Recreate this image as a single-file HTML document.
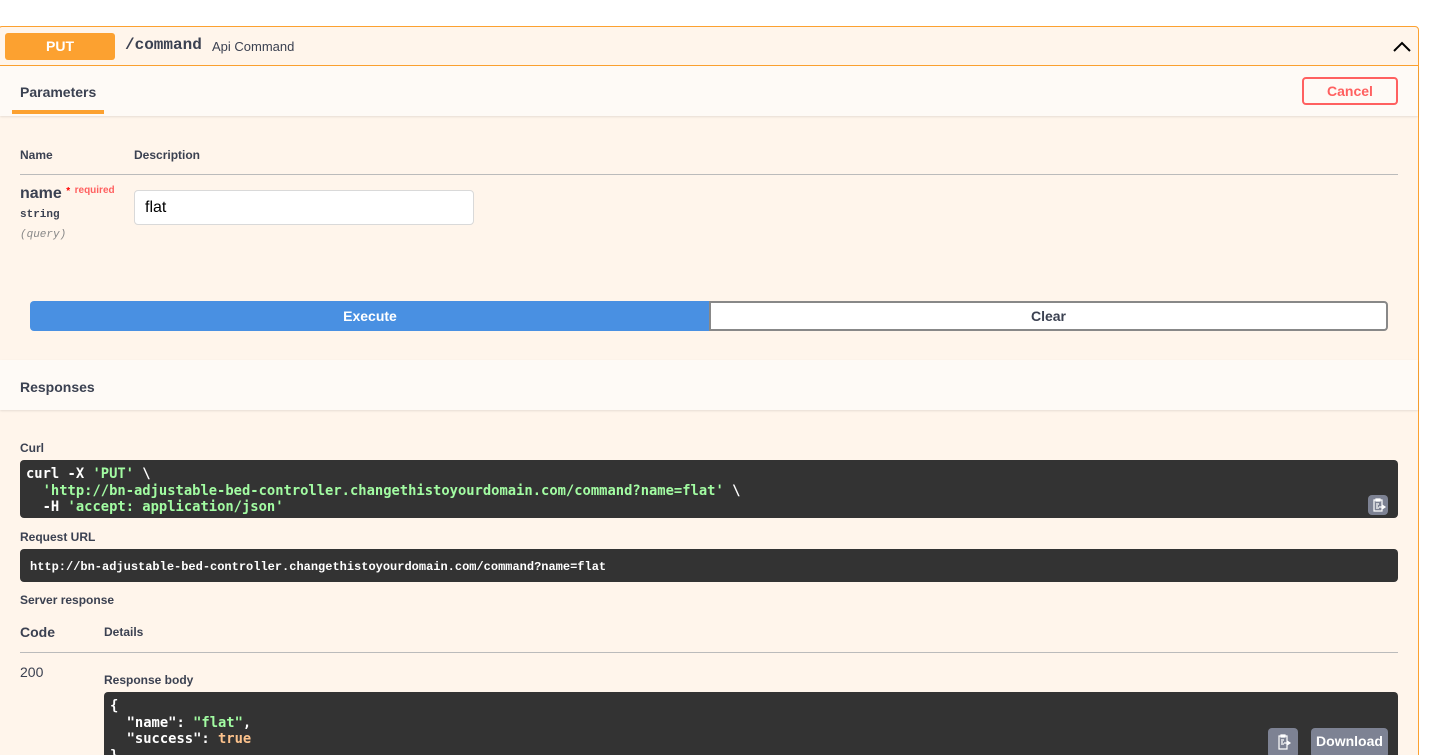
<!DOCTYPE html>
<html style="height:755px;overflow:hidden"><head><style>
*{box-sizing:border-box;margin:0;padding:0}
body{width:1435px;height:755px;background:#fff;font-family:"Liberation Sans",sans-serif;color:#3b4151;position:relative;overflow:hidden}
.a{position:absolute}
.box{left:-2px;top:26px;width:1421px;height:740px;border:1px solid #fca130;border-radius:4px;background:#fff5eb}
.b{font-weight:bold}
.mono{font-family:"Liberation Mono",monospace}
.code{background:#333;border-radius:4px;color:#fff;font-family:"DejaVu Sans Mono","Liberation Mono",monospace;font-weight:bold;font-size:13.8px}
.g{color:#a2fca2}
.cp{width:20px;height:20px;background:#7d8293;border-radius:4px}
</style></head><body>
<div class="a box"></div>
<div class="a" style="left:0;top:65px;width:1418px;height:1px;background:#fca130"></div>
<div class="a b" style="left:5px;top:33px;width:110px;height:27px;background:#fca130;border-radius:3px;color:#fff;font-size:14px;text-align:center;line-height:27px">PUT</div>
<div class="a mono b" style="left:125px;top:36px;font-size:16px;color:#3b4151">/command</div>
<div class="a" style="left:212px;top:39px;font-size:13px">Api Command</div>
<svg class="a" style="left:1392px;top:38px" width="20" height="16"><path d="M2 13 L10 5 L18 13" stroke="#000" stroke-width="2" fill="none"/></svg>
<div class="a" style="left:0;top:66px;width:1418px;height:50px;background:#fefaf6;box-shadow:0 1px 2px rgba(0,0,0,.1)"></div>
<div class="a b" style="left:20px;top:84px;font-size:14px">Parameters</div>
<div class="a" style="left:12px;top:110px;width:92px;height:4px;background:#fca130"></div>
<div class="a b" style="left:1302px;top:77px;width:96px;height:28px;border:2px solid #ff6060;border-radius:4px;color:#ff6060;font-size:14px;text-align:center;line-height:24px">Cancel</div>
<div class="a b" style="left:20px;top:148px;font-size:12px">Name</div>
<div class="a b" style="left:134px;top:148px;font-size:12px">Description</div>
<div class="a" style="left:20px;top:174px;width:1378px;height:1px;background:#bbb"></div>
<div class="a b" style="left:20px;top:185px;font-size:16px">name <span style="color:#ff0000;font-size:10px;vertical-align:4px">*</span> <span style="color:#ff6060;font-size:10px;vertical-align:5px">required</span></div>
<div class="a mono b" style="left:20px;top:209px;font-size:11px">string</div>
<div class="a mono" style="left:20px;top:229px;font-size:11px;font-style:italic;color:#888">(query)</div>
<div class="a" style="left:134px;top:190px;width:340px;height:35px;background:#fff;border:1px solid #d9d9d9;border-radius:4px;font-size:16px;padding:8px 10px;color:#000">flat</div>
<div class="a b" style="left:30px;top:301px;width:680px;height:30px;background:#4990e2;border-radius:4px 0 0 4px;color:#fff;font-size:14px;text-align:center;line-height:30px">Execute</div>
<div class="a b" style="left:709px;top:301px;width:679px;height:30px;border:2px solid #888;border-radius:0 4px 4px 0;background:#fff;font-size:14px;text-align:center;line-height:26px">Clear</div>
<div class="a" style="left:0;top:360px;width:1418px;height:50px;background:#fefaf6;box-shadow:0 1px 2px rgba(0,0,0,.1)"></div>
<div class="a b" style="left:20px;top:379px;font-size:14px">Responses</div>
<div class="a b" style="left:20px;top:441px;font-size:12px">Curl</div>
<div class="a code" style="left:20px;top:460px;width:1378px;height:58px;padding:6px 6px;line-height:16.5px;white-space:pre">curl -X <span class="g">'PUT'</span> \
  <span class="g">'http://bn-adjustable-bed-controller.changethistoyourdomain.com/command?name=flat'</span> \
  -H <span class="g">'accept: application/json'</span></div>
<div class="a cp" style="left:1368px;top:495px"><svg width="20" height="20"><path d="M6 5h8v11H6z M8 4h4v2H8z M8 9h3 M8 11h2 M8 13h3 M11 12h6 M14 10l3 2-3 2" stroke="#fff" stroke-width="1.2" fill="none"/></svg></div>
<div class="a b" style="left:20px;top:530px;font-size:12px">Request URL</div>
<div class="a code" style="left:20px;top:549px;width:1378px;height:33px;padding:11px 10px 0;font-family:'Liberation Mono',monospace;font-size:12px">http://bn-adjustable-bed-controller.changethistoyourdomain.com/command?name=flat</div>
<div class="a b" style="left:20px;top:593px;font-size:12px">Server response</div>
<div class="a b" style="left:20px;top:624px;font-size:14px">Code</div>
<div class="a b" style="left:104px;top:625px;font-size:12px">Details</div>
<div class="a" style="left:20px;top:652px;width:1378px;height:1px;background:#bbb"></div>
<div class="a" style="left:20px;top:664px;font-size:14px">200</div>
<div class="a b" style="left:104px;top:673px;font-size:12px">Response body</div>
<div class="a code" style="left:104px;top:692px;width:1294px;height:80px;padding:6px 6px;line-height:16.5px;white-space:pre">{
  "name": <span class="g">"flat"</span>,
  "success": <span style="color:#fcc28c">true</span>
}</div>
<div class="a cp" style="left:1268px;top:728px;width:30px;height:30px"><svg width="30" height="30"><path d="M11 8h8v13H11z M13 7h4v2h-4z M13 12h3 M13 14h2 M13 16h3 M16 15h6 M19 13l3 2-3 2" stroke="#fff" stroke-width="1.2" fill="none"/></svg></div>
<div class="a b" style="left:1311px;top:728px;width:77px;height:30px;background:#7d8293;border-radius:4px;color:#fff;font-size:14px;text-align:center;line-height:26px">Download</div>
</body></html>
